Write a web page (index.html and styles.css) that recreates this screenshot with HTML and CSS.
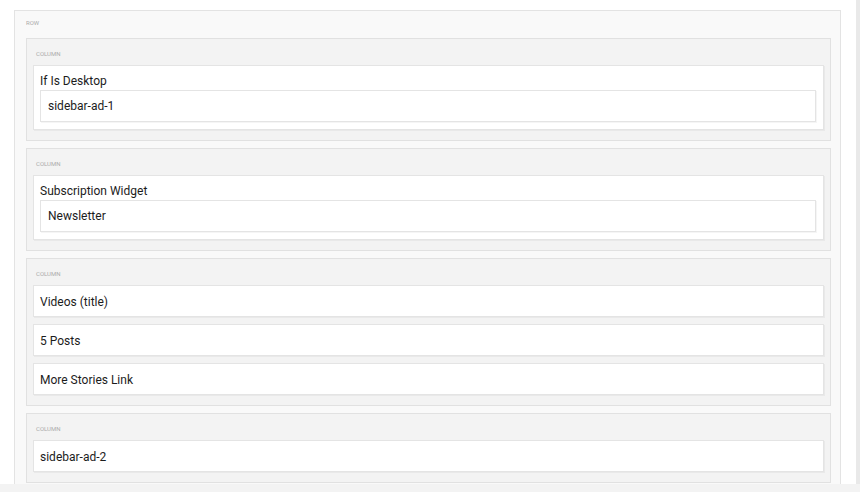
FILE: index.html
```html
<!DOCTYPE html>
<html>
<head>
<meta charset="utf-8">
<link rel="stylesheet" href="styles.css">
</head>
<body>
<div class="frame">
  <div class="canvas">
    <div class="row">
      <div class="label row-label">Row</div>
      <div class="column">
        <div class="label">Column</div>
        <div class="widget">
          <div class="widget-title">If Is Desktop</div>
          <div class="field">sidebar-ad-1</div>
        </div>
      </div>
      <div class="column">
        <div class="label">Column</div>
        <div class="widget">
          <div class="widget-title">Subscription Widget</div>
          <div class="field">Newsletter</div>
        </div>
      </div>
      <div class="column">
        <div class="label">Column</div>
        <div class="widget simple">Videos (title)</div>
        <div class="widget simple">5 Posts</div>
        <div class="widget simple">More Stories Link</div>
      </div>
      <div class="column">
        <div class="label">Column</div>
        <div class="widget simple">sidebar-ad-2</div>
      </div>
    </div>
  </div>
  <div class="scroll-strip"></div>
</div>
<div class="bottom-band"></div>
</body>
</html>
```
FILE: styles.css
```css
html, body {
  margin: 0;
  padding: 0;
  width: 860px;
  height: 492px;
  overflow: hidden;
  background: #f3f3f3;
  font-family: Roboto, "Liberation Sans", Arial, sans-serif;
  color: #1c1c1c;
}

.frame {
  display: flex;
  height: 484px;
  overflow: hidden;
}

.canvas {
  width: 856px;
  height: 484px;
  background: #fff;
  overflow: hidden;
  padding: 10px 0 0 14px;
  box-sizing: border-box;
}

.scroll-strip {
  width: 4px;
  background: #e9e9e9;
}

.bottom-band {
  height: 8px;
  background: #f3f3f3;
}

.row {
  width: 827px;
  box-sizing: border-box;
  background: #f9f9f9;
  border: 1px solid #e3e3e3;
  border-bottom: none;
  padding: 0 9px 20px 11px;
  min-height: 500px;
}

.label {
  font-size: 6px;
  height: 26px;
  line-height: 26px;
  box-sizing: border-box;
  padding: 2px 0 0 3px;
  text-transform: uppercase;
  color: #ababab;
}

.row-label {
  height: 27px;
  line-height: 24px;
  padding: 0 0 0 0;
}

.column {
  background: #f3f3f3;
  border: 1px solid #e1e1e1;
  padding: 0 6px 10px 6px;
  margin-bottom: 7px;
}

.widget {
  background: #fff;
  border: 1px solid #e4e4e4;
  box-shadow: 1px 1px 0 rgba(0, 0, 0, 0.04);
  padding: 0 7px 7px 6px;
  font-size: 12px;
}

.widget + .widget {
  margin-top: 7px;
}

.widget-title {
  height: 24px;
  line-height: 19px;
  padding-top: 6px;
  box-sizing: border-box;
}

.field {
  border: 1px solid #e4e4e4;
  box-shadow: 1px 1px 0 rgba(0, 0, 0, 0.04);
  height: 30px;
  line-height: 31px;
  padding-left: 7px;
}

.widget.simple {
  height: 30px;
  line-height: 32px;
  padding: 0 6px;
}
```
